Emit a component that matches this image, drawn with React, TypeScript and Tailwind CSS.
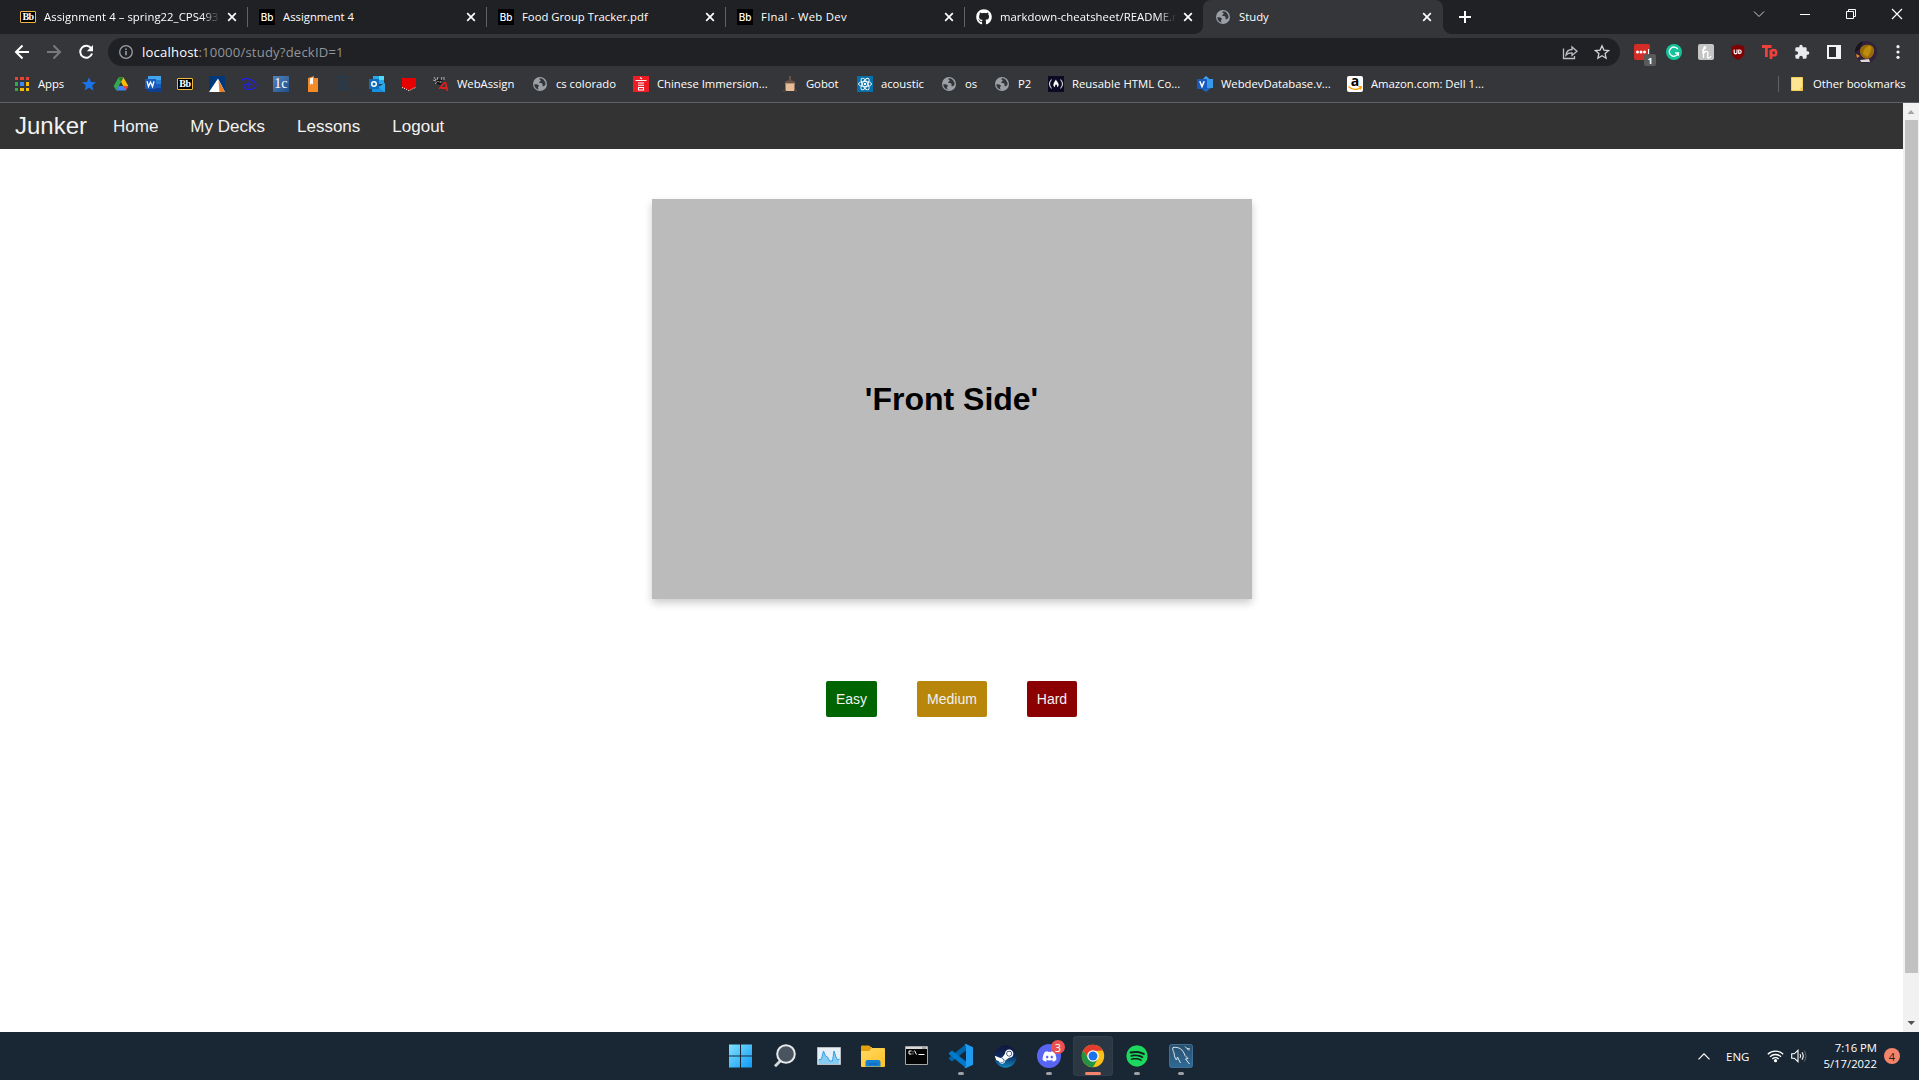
import React from "react";
import { FaGithub, FaSteam, FaDiscord, FaSpotify } from "react-icons/fa";

type Kids = { children: React.ReactNode };

const Globe = () => (
  <svg width="16" height="16" viewBox="0 0 16 16">
    <circle cx="8" cy="8" r="7" fill="#9aa0a6" />
    <path d="M8.5 2.2c-1.6.2-1.2 1.5-.2 1.9 1 .5.2 1.2-.6 1.6-.9.5-.4 1.6.8 1.4 1.6-.2 2.4.9 2 2.1-.3.9.6 1.4 1.6.8 1-.5 1.4-1.300 1.500-2.200C13.300 5 11 2.400 8.500 2.200zM2.300 8.200c1 .2 2.900-.1 4 .7 1.100.800.200 1.600-.2 2.200-.4.700.1 1.700.6 2.500C4.200 13.200 2.300 10.800 2.300 8.200z" fill="#35363a" />
  </svg>
);

const BbSquare = () => (
  <span className="flex h-4 w-4 items-center justify-center bg-black font-['Inter'] text-[10px] font-medium leading-none text-white">Bb</span>
);

const BbGold = () => (
  <span className="flex h-3 w-4 items-center justify-center rounded-[1px] border border-[#f0b83c] bg-black font-['Liberation_Serif'] text-[10px] font-bold leading-none tracking-[-0.5px] text-white">Bb</span>
);

const Close = () => (
  <svg width="10" height="10" viewBox="0 0 10 10" stroke="#fff" strokeWidth="1.7">
    <path d="M1.200 1.200l7.600 7.600M8.800 1.200L1.200 8.800" />
  </svg>
);

const tabs = [
  { title: "Assignment 4 – spring22_CPS493", icon: <BbGold />, fade: true },
  { title: "Assignment 4", icon: <BbSquare /> },
  { title: "Food Group Tracker.pdf", icon: <BbSquare /> },
  { title: "FInal - Web Dev", icon: <BbSquare />, wide: true },
  { title: "markdown-cheatsheet/README.md", icon: <FaGithub size={16} color="#fff" />, fade: true },
];

const TabStrip = () => (
  <div className="flex h-[34px] bg-[#202124] pl-2">
    {tabs.map((t, i) => (
      <div key={t.title} className="relative flex h-[34px] w-[239px] shrink-0 items-center pl-3">
        {t.icon}
        <span className={t.fade ? "ml-2 w-[176px] overflow-hidden whitespace-nowrap tracking-[0.06px] [mask-image:linear-gradient(to_right,#000_158px,transparent_176px)]" : t.wide ? "ml-2 w-[176px] whitespace-nowrap tracking-[0.3px]" : "ml-2 w-[176px] whitespace-nowrap"}>{t.title}</span>
        <span className="ml-[7px]"><Close /></span>
        {i < 4 && <span className="absolute right-[-1px] top-[7px] h-5 w-px bg-[#5f6368]" />}
      </div>
    ))}
    <div className="relative flex h-[34px] w-[240px] shrink-0 items-center rounded-t-lg bg-[#35363a] pl-3">
      <span className="absolute bottom-0 left-[-8px] h-2 w-2 bg-[radial-gradient(circle_at_0_0,transparent_7.500px,#35363a_8px)]" />
      <span className="absolute bottom-0 right-[-8px] h-2 w-2 bg-[radial-gradient(circle_at_100%_0,transparent_7.500px,#35363a_8px)]" />
      <Globe />
      <span className="ml-2 w-[176px]">Study</span>
      <span className="ml-[7px]"><Close /></span>
    </div>
    <div className="flex flex-1 items-center pl-[16px]">
      <svg width="12" height="12" viewBox="0 0 12 12" stroke="#fff" strokeWidth="2"><path d="M6 0v12M0 6h12" /></svg>
    </div>
    <svg className="mt-[6px] shrink-0" width="170" height="16" viewBox="0 0 170 16" fill="none" stroke="#fff" strokeWidth="1">
      <path d="M5 5.500l5 5 5-5" stroke="#d0d0d0" />
      <path d="M51 8.500h10" />
      <path d="M97.500 5.500h7v7h-7zM99.500 5.500v-2h7v7h-2" />
      <path d="M143 3l10 10M153 3l-10 10" strokeWidth="1.200" />
    </svg>
  </div>
);

const Extensions = () => (
  <div className="flex items-center gap-4">
    <span className="relative flex h-4 w-4 items-center rounded-[2px] bg-[#d32d27] pl-[2px]">
      <svg width="14" height="6" viewBox="0 0 14 6" fill="#fff"><circle cx="1.500" cy="3" r="1.500" /><circle cx="5" cy="3" r="1.500" /><circle cx="8.500" cy="3" r="1.500" /><path d="M12 0h1v5h-1z" /></svg>
      <span className="absolute left-[10px] top-[10px] flex h-3 w-3 items-center justify-center rounded-[2px] bg-[#5a5a5a] text-[9px] font-bold leading-none">1</span>
    </span>
    <svg width="16" height="16" viewBox="0 0 16 16" fill="none" stroke="#fff" strokeWidth="1.400"><circle cx="8" cy="8" r="8" fill="#15c39a" stroke="none" /><path d="M11.800 5.200A4.600 4.600 0 1 0 12.300 9H9M12.300 8.500v3.200" /></svg>
    <span className="flex h-4 w-4 items-center justify-center rounded-[2px] bg-[#c4c4c4]">
      <svg width="12" height="13" viewBox="0 0 12 13" fill="none" stroke="#fff" strokeWidth="1.300"><path d="M2 4c2 0 4-2 3.500-3S3.500 1 3.500 4v8M3.500 8c1-3 4.500-3.500 4.500-1 0 2-1.500 5 .5 5 1.300 0 2-1 2.500-2M2 6.500l4-1" /></svg>
    </span>
    <svg width="16" height="16" viewBox="0 0 16 16"><path d="M8 0c2 1.500 4 2 6.500 2v6c0 4-3 6.500-6.500 8-3.500-1.500-6.500-4-6.500-8V2C4 2 6 1.500 8 0z" fill="#800000" stroke="#50282a" strokeWidth=".5" /><path d="M4.200 5.500v3a1.300 1.300 0 0 0 2.800 0v-3M8.700 6v3.400h.8a1.700 1.700 0 0 0 0-3.400z" fill="none" stroke="#fff" strokeWidth="1.200" /></svg>
    <svg width="16" height="16" viewBox="0 0 16 16" fill="none" stroke="#ef403c" strokeWidth="2.800"><path d="M0 2.500h9.500M4.400 2.500V13M9 6v9" /><circle cx="11.600" cy="8.700" r="2.700" strokeWidth="2.400" /></svg>
    <svg width="16" height="16" viewBox="0 0 24 24" fill="#e8eaed"><path d="M20.500 11H19V7a2 2 0 0 0-2-2h-4V3.500a2.500 2.500 0 0 0-5 0V5H4a2 2 0 0 0-2 2v3.800h1.500a2.700 2.700 0 0 1 0 5.400H2V20a2 2 0 0 0 2 2h3.800v-1.500a2.700 2.700 0 0 1 5.400 0V22H17a2 2 0 0 0 2-2v-4h1.500a2.500 2.500 0 0 0 0-5z" /></svg>
    <svg width="16" height="16" viewBox="0 0 16 16"><path d="M1 1h14v14H1z" fill="#f1f3f4" /><path d="M3 3h7v10H3z" fill="#2b2c30" /></svg>
    <span className="-mx-[3px] block h-[22px] w-[22px] overflow-hidden rounded-full">
      <svg width="22" height="22" viewBox="0 0 22 22"><path d="M0 0h22v22H0z" fill="#30213c" /><path d="M0 0h8l-3 8-5 3z" fill="#171420" /><path d="M5 11c-1-7 8-9 12-6 4 3 2 10-2 12-4 2-9 0-10-6z" fill="#9a6a08" /><path d="M8 13c0-5 5-9 8-8 1 3-1 9-4 11z" fill="#bd8c0c" /><path d="M1 13l4 2-3 2z" fill="#f18a1c" /><path d="M5 19l9-1 1 3H6z" fill="#ded8d4" /></svg>
    </span>
    <svg width="16" height="16" viewBox="0 0 16 16" fill="#f1f3f4"><circle cx="8" cy="2.700" r="1.600" /><circle cx="8" cy="8" r="1.600" /><circle cx="8" cy="13.300" r="1.600" /></svg>
  </div>
);

const Toolbar = () => (
  <div className="flex h-9 items-center">
    <svg className="ml-[14px]" width="16" height="16" viewBox="0 0 16 16" fill="none" stroke="#fff" strokeWidth="2"><path d="M15 8H2.500M8.500 1.500L2 8l6.500 6.500" /></svg>
    <svg className="ml-4" width="16" height="16" viewBox="0 0 16 16" fill="none" stroke="#77797d" strokeWidth="2"><path d="M1 8h12.500M7.500 1.500L14 8l-6.500 6.500" /></svg>
    <svg className="ml-4" width="16" height="16" viewBox="0 0 16 16" fill="none" stroke="#fff" strokeWidth="2"><path d="M13.300 4.500A6 6 0 1 0 14 9.500" /><path d="M15 1v6.200H8.800z" fill="#fff" stroke="none" /></svg>
    <div className="ml-[14px] flex h-7 w-[1512px] items-center rounded-full bg-[#202124] pl-[11px] pr-2.5">
      <svg width="14" height="14" viewBox="0 0 14 14" fill="none" stroke="#9aa0a6" strokeWidth="1.300"><circle cx="7" cy="7" r="6.300" /><path d="M7 6v4.300M7 3.400v1.500" strokeWidth="1.600" /></svg>
      <span className="ml-[9px] flex-1 pt-[2px] text-[13.100px] tracking-[0.18px] text-[#92959a]"><span className="text-white">localhost</span>:10000/study?deckID=1</span>
      <svg width="16" height="16" viewBox="0 0 16 16" fill="none" stroke="#bdc1c6" strokeWidth="1.300"><path d="M1.500 4.500v10h11V12M4 11c.5-4 2.500-5.500 6-5.500V3l5 4.200-5 4.200V8.800c-2.500 0-4.500.4-6 2.200z" /></svg>
      <svg className="ml-4" width="16" height="16" viewBox="0 0 16 16" fill="none" stroke="#d0d3d7" strokeWidth="1.300"><path d="M8 1.800l1.900 4.300 4.700.4-3.500 3.100 1 4.600L8 11.800l-4.100 2.400 1-4.600-3.500-3.100 4.700-.4z" /></svg>
    </div>
    <div className="ml-[14px]"><Extensions /></div>
  </div>
);

const svg = (children: React.ReactNode) => <svg width="16" height="16" viewBox="0 0 16 16">{children}</svg>;

const dotColors = ["#ea4335", "#ea4335", "#ea4335", "#34a853", "#4285f4", "#fbbc04", "#34a853", "#fbbc04", "#fbbc04"];
const AppsIcon = () => (
  <span className="grid grid-cols-3 gap-[2px]">
    {dotColors.map((c, i) => <span key={i} className="h-[3.300px] w-[3.300px]" style={{ background: c }} />)}
  </span>
);

const small = [
  svg(<path d="M8 1.300l2 4.600 5 .4-3.800 3.300 1.200 4.900L8 11.800l-4.400 2.700 1.200-4.900L1 6.300l5-.4z" fill="#1a73e8" />),
  svg(<><path d="M5.500 1.500h5l4.800 8.500h-5z" fill="#fbbc04" /><path d="M5.500 1.500L.7 10l2.500 4.400L8 6z" fill="#34a853" /><path d="M5.500 1.500h5L8 6z" fill="#188038" /><path d="M5.700 10h9.600l-2.500 4.400H3.200z" fill="#4285f4" /><path d="M10.300 10h5l-2.500 4.400z" fill="#ea4335" /></>),
  svg(<><path d="M3 0h13v4H3z" fill="#41a5ee" /><path d="M3 4h13v4H3z" fill="#2b7cd3" /><path d="M3 8h13v4H3z" fill="#185abd" /><path d="M3 12h13v4H3z" fill="#103f91" /><path d="M0 3h11v10H0z" fill="#185abd" /><path d="M2 5.300l1.500 5.200L5.500 6l2 4.500L9 5.300" fill="none" stroke="#fff" strokeWidth="1.300" /></>),
  <BbGold />,
  svg(<><path d="M0 0h16v16H0z" fill="#00387b" /><path d="M9 2.500L16 16H0z" fill="#fff" /><path d="M9.500 4.500L16 16h-5.500z" fill="#ef7d22" /></>),
  svg(<path d="M.5 3.800C5 .8 14 4 15 8.700c.5 3.800-4.500 5.300-8.500 4.600-2.500-.5-4-2-3.500-3.800.5-1.500 4-1.800 6-1.300 2 .4 2.500 1.400 1.200 2M7 5.500v8.500M.5 3.800l3 .2" fill="none" stroke="#2020e8" strokeWidth="1.200" />),
  <span className="flex h-4 w-4 items-center justify-center bg-linear-to-br from-[#5284bb] to-[#234f8c] font-['Liberation_Serif'] text-[14px] leading-none text-white">1c</span>,
  svg(<><path d="M3 2l6-2v2h4v14H3z" fill="#f58a27" /><path d="M5 2.500l3-1v7L6.500 7.500 5 9z" fill="#fff" /></>),
  svg(<><path d="M1 1h9v12H1z" fill="none" stroke="#233d50" strokeWidth="1.300" /><path d="M8 5H4v5h4M12 14h4" fill="none" stroke="#233d50" strokeWidth="1.500" /></>),
  svg(<><path d="M4 0h11v8H4z" fill="#28a8ea" /><path d="M10 0h5v4h-5z" fill="#50d9ff" /><path d="M4 4h6v5H4z" fill="#0364b8" /><path d="M3 16V7l7 4 6-4v9z" fill="#1490df" /><path d="M9 11l7-4v9z" fill="#28a8ea" /><path d="M0 3h10v10H0z" fill="#0f6cbd" /><circle cx="5" cy="8" r="2.300" fill="none" stroke="#fff" strokeWidth="1.400" /></>),
  svg(<><path d="M1 2h14v9.500c-2 .5-5 1.800-7 3.500-2-1.700-5-3-7-3.500z" fill="#e60000" /><path d="M1 11.500c2 .5 5 1.800 7 3.500 2-1.700 5-3 7-3.500" fill="none" stroke="#fff" strokeDasharray="1 1.200" /></>),
];

const marks = [
  { t: "WebAssign", w: "w-[59px]", icon: svg(<><path d="M1 1l2 3M5 1l-1 3M9 1L8 4M11 1v3M0 4l3 1M2 8l2-2" stroke="#bbb" strokeWidth=".9" fill="none" /><circle cx="6.500" cy="6" r="2.800" fill="#111" /><path d="M6.500 6h2M4.500 5.500h1" stroke="#ddd" /><path d="M6 13l5-6h1.500L14.500 15M8 12h5.500" fill="none" stroke="#d9201f" strokeWidth="1.800" /></>) },
  { t: "cs colorado", w: "w-[61px]", icon: <Globe /> },
  { t: "Chinese Immersion...", w: "w-[109px]", icon: svg(<><path d="M0 0h16v16H0z" fill="#ee1c25" /><path d="M7 1.500l2 1.500M2.500 4.500h11M5 7h6M5 9.200h6M5.500 11.500h5V14h-5z" fill="none" stroke="#fff" strokeWidth="1.100" /></>) },
  { t: "Gobot", w: "w-[35px]", icon: svg(<><path d="M7.300 0h1.400v4H7.300z" fill="#8d5a44" /><path d="M3 6c1-2.500 9-2.500 10 0v2H3z" fill="#6b5148" /><path d="M3.500 7h9v8h-9z" fill="#e8bd96" /><path d="M3.500 7h9v1h-9z" fill="#b89070" /><path d="M1 14h3v1.500H1zM12 14h3v1.500h-3z" fill="#584940" /></>) },
  { t: "acoustic", w: "w-[44px]", icon: svg(<><path d="M0 0h16v16H0z" fill="#0870a8" /><g fill="none" stroke="#fff" strokeWidth=".9"><ellipse cx="8" cy="8" rx="6.500" ry="2.600" /><ellipse cx="8" cy="8" rx="6.500" ry="2.600" transform="rotate(60 8 8)" /><ellipse cx="8" cy="8" rx="6.500" ry="2.600" transform="rotate(120 8 8)" /></g><circle cx="8" cy="8" r="1.200" fill="#fff" /></>) },
  { t: "os", w: "w-[13px]", icon: <Globe /> },
  { t: "P2", w: "w-[14px]", icon: <Globe /> },
  { t: "Reusable HTML Co...", w: "w-[109px] tracking-[0.06px]", icon: svg(<><path d="M0 0h16v16H0z" fill="#0a0a23" /><path d="M3.500 3.500Q-.5 8 3.500 12.500M12.500 3.500q4 4.500 0 9" fill="none" stroke="#d5d5e0" strokeWidth="1.100" /><path d="M8 3.500c.5 2 3 3.300 2.600 5.800-.2 1-.8 1.700-1.600 2 .6-1.300.2-2-1-3-.8 1-1.500 1.700-.8 3C4 10.300 5.500 6.700 8 3.500z" fill="#fff" /></>) },
  { t: "WebdevDatabase.v...", w: "w-[110px]", icon: svg(<><path d="M5 4l4-4 5 4v8l-5 4-4-3z" fill="#1b68c4" /><path d="M10 3h6v9h-6z" fill="#3999e8" /><path d="M5 4l4-4 3 3-3 2z" fill="#41a5ee" /><path d="M0 3h10v10H0z" fill="#185abd" /><path d="M2.800 5.300L5 10.500l2.200-5.200" fill="none" stroke="#fff" strokeWidth="1.500" /></>) },
  { t: "Amazon.com: Dell 1...", w: "w-[115px]", icon: <span className="relative flex h-4 w-4 justify-center rounded-[2px] bg-white font-['Open_Sans'] text-[14px] font-bold leading-[10px] text-black">a<svg className="absolute bottom-[1px] left-[1px]" width="14" height="5" viewBox="0 0 14 5" fill="none" stroke="#ff9900" strokeWidth="1.300"><path d="M.5.500c4 4 9 3.500 12 1.200M10.500.700h2.800l-.8 2.800" /></svg></span> },
];

const Bookmarks = () => (
  <div className="flex h-[33px] items-center pb-[5px] pl-[15px]">
    <AppsIcon />
    <span className="ml-[9px] w-[27px]">Apps</span>
    <div className="ml-4 flex shrink-0 items-center gap-4">
      {small.map((s, i) => <span key={i} className="flex w-4 justify-center">{s}</span>)}
      {marks.map((m) => (
        <span key={m.t} className="flex shrink-0 items-center gap-2">{m.icon}<span className={`${m.w} whitespace-nowrap`}>{m.t}</span></span>
      ))}
    </div>
    <span className="ml-auto h-4 w-px bg-[#5f6368]" />
    <svg className="ml-3" width="13" height="15" viewBox="0 0 13 15"><path d="M.5.500h11v13h-11z" fill="#ffe591" stroke="#f3cf57" /><path d="M9.500 10.500h2.500V14H9.500z" fill="#f4c542" /></svg>
    <span className="ml-[9px] mr-[13px] w-[93px] whitespace-nowrap">Other bookmarks</span>
  </div>
);

const Page = () => (
  <div className="flex h-[929px]">
    <main className="flex flex-1 flex-col items-center bg-white font-['Liberation_Sans',sans-serif]">
      <nav className="flex h-[46px] w-full items-center bg-[#333] text-[#f2f2f2]">
        <span className="ml-[15px] w-[98px] text-[24px] leading-none">Junker</span>
        <div className="flex gap-8 pt-[2px] text-[17px]">
          <span>Home</span><span>My Decks</span><span>Lessons</span><span>Logout</span>
        </div>
      </nav>
      <section className="mt-[50px] flex h-[400px] w-[600px] items-center justify-center bg-[#bbb] shadow-[0_4px_8px_0_rgba(0,0,0,0.2)]">
        <h1 className="text-[32px] font-bold text-black">'Front Side'</h1>
      </section>
      <div className="mt-[82px] flex gap-10 text-[14px] text-[#f2f2f2]">
        <button className="h-9 w-[51px] rounded-[2px] bg-[#006400]">Easy</button>
        <button className="h-9 w-[70px] rounded-[2px] bg-[#b8860b]">Medium</button>
        <button className="h-9 w-[50px] rounded-[2px] bg-[#8b0000]">Hard</button>
      </div>
    </main>
    <aside className="flex w-4 flex-col items-center bg-[#f1f1f1]">
      <svg width="16" height="17" viewBox="0 0 16 17"><path d="M4.500 11L8 7l3.500 4z" fill="#a3a3a3" /></svg>
      <div className="w-[13px] flex-1 bg-[#c1c1c1]" />
      <svg width="16" height="59" viewBox="0 0 16 59"><path d="M4.500 48h7.500l-3.700 4z" fill="#505050" /></svg>
    </aside>
  </div>
);

const TaskItem = ({ children, running, active }: Kids & { running?: boolean; active?: boolean }) => (
  <div className="relative flex h-12 w-11 items-center justify-center">
    {active && <span className="absolute left-[2px] top-1 h-10 w-10 rounded bg-[#2b3743] ring-1 ring-inset ring-[#323e4a]" />}
    <span className="relative">{children}</span>
    {running && <span className="absolute bottom-[5px] h-[3px] w-1.5 rounded-full bg-[#9ba1a6]" />}
    {active && <span className="absolute bottom-[5px] h-[3px] w-4 rounded-full bg-[#f4846b]" />}
  </div>
);

const Taskbar = () => (
  <footer className="flex h-12 bg-[#192734] text-white">
    <div className="ml-[719px] flex">
      <TaskItem>
        <svg width="24" height="24" viewBox="0 0 24 24"><defs><linearGradient id="win" gradientUnits="userSpaceOnUse" x1="0" y1="0" x2="24" y2="24"><stop stopColor="#82e2fd" /><stop offset="1" stopColor="#0a98f7" /></linearGradient></defs><path d="M0 .5h11v11H0zM12 .5h11v11H12zM0 12.500h11v11H0zM12 12.500h11v11H12z" fill="url(#win)" /></svg>
      </TaskItem>
      <TaskItem>
        <svg width="24" height="24" viewBox="0 0 24 24" fill="none"><path d="M8.200 16L2 22.300" stroke="#d5d8db" strokeWidth="2.800" /><circle cx="13" cy="10" r="8.800" fill="#485561" stroke="#e6e8ea" strokeWidth="2" /></svg>
      </TaskItem>
      <TaskItem>
        <svg width="24" height="18" viewBox="0 0 24 18"><path d="M.5.500h23v17H.5z" fill="#e8f0f7" stroke="#b8bec4" /><path d="M1.500 13l3-1 2-8 2 5 2 1 2 4 3 0 1.500-10 2 6 1.500 3 2-1v5h-21z" fill="#8acbf2" /><path d="M1.500 13l3-1 2-8 2 5 2 1 2 4h3l1.500-10 2 6 1.500 3 2-1" fill="none" stroke="#2e9fe6" /></svg>
      </TaskItem>
      <TaskItem>
        <svg width="24" height="22" viewBox="0 0 24 22"><defs><linearGradient id="fold" x1="0" y1="0" x2="1" y2="1"><stop stopColor="#ffda65" /><stop offset="1" stopColor="#ffc123" /></linearGradient></defs><path d="M0 1.500Q0 .5 1 .5h7l2.500 2H0z M0 2h11v5H0z" fill="#e5a00d" /><path d="M0 6h8l3-3h12q1 0 1 1v17q0 1-1 1H1q-1 0-1-1z" fill="url(#fold)" /><path d="M4.500 21.500V17q0-2 2-2h11q2 0 2 2v4.500z" fill="#1580d4" /><path d="M7.500 18.500h9v1h-9z" fill="#0b63b5" /></svg>
      </TaskItem>
      <TaskItem>
        <svg width="24" height="20" viewBox="0 0 24 20"><path d="M.5.500h22v18h-22z" fill="#050505" stroke="#a6a6a6" /><path d="M1 1h21v2H1z" fill="#dadada" /><path d="M17 1.500h4v1h-4z" fill="#777" /><path d="M6.500 5H4v3h2.500M8 5.500v.8M8 7.500v.8M9.500 4.500l2 4M13.500 8.500h6" fill="none" stroke="#fff" /></svg>
      </TaskItem>
      <TaskItem running>
        <svg width="24" height="24" viewBox="0 0 24 24"><path d="M17 0v6.500L3 17.500 0 15.200v-1.400z" fill="#0065a9" /><path d="M17 24v-6.500L3 6.500 0 8.800v1.400z" fill="#007acc" /><path d="M17 0l7 3.300v17.400L17 24q-1 .2-1.500-.5L17 22V2L15.500.5Q16 0 17 0z" fill="#1f9cf0" /></svg>
      </TaskItem>
      <TaskItem>
        <svg className="absolute" width="0" height="0"><defs><linearGradient id="steam" x1="0" y1="0" x2="0" y2="1"><stop stopColor="#13143c" /><stop offset=".5" stopColor="#0b2c5c" /><stop offset="1" stopColor="#1389c4" /></linearGradient></defs></svg>
        <span className="flex h-[22px] w-[22px] items-center justify-center rounded-full bg-[radial-gradient(circle,#fff_9.500px,transparent_10px)]"><FaSteam size={23} className="shrink-0 fill-[url(#steam)]" /></span>
      </TaskItem>
      <TaskItem running>
        <span className="flex h-6 w-6 items-center justify-center rounded-full bg-[#5865f2]"><FaDiscord size={15} /></span>
        <span className="absolute -right-[4px] -top-[4px] flex h-[14px] w-[14px] items-center justify-center rounded-full bg-[#eb5150] text-[11px] leading-none">3</span>
      </TaskItem>
      <TaskItem active>
        <svg width="24" height="24" viewBox="0 0 24 24"><circle cx="12" cy="12" r="11.200" fill="#fbc116" /><path d="M2.300 6.400A11.200 11.200 0 0 1 21.700 6.400L12 7 7.500 14.600z" fill="#e33b2e" /><path d="M2.300 6.400A11.200 11.200 0 0 0 12 23.200l4.700-8.200-4.700 2-4.500-2.400z" fill="#229342" /><circle cx="12" cy="12" r="5.800" fill="#fff" /><circle cx="12" cy="12" r="4.500" fill="#1a73e8" /></svg>
      </TaskItem>
      <TaskItem running><FaSpotify size={22} color="#1ed760" className="rounded-full bg-[#10201c]" /></TaskItem>
      <TaskItem running>
        <svg width="24" height="24" viewBox="0 0 24 24"><defs><linearGradient id="sql" x1="0" y1="0" x2="0" y2="1"><stop stopColor="#2a4f6e" /><stop offset="1" stopColor="#2f6b96" /></linearGradient></defs><rect x=".5" y=".5" width="23" height="23" rx="2" fill="url(#sql)" stroke="#3f6f96" /><path d="M4 3.500c6-1 10 2 12 8l3 3-2.500.5 4 5M4 3.500c-1 2 .5 3.500 1 5.500.5 3 1 6 2.500 7l1-3 3 6M16 2.500l2 2 3 .5M18 4.500l2 2" fill="none" stroke="#dce8f0" strokeWidth="1" /></svg>
      </TaskItem>
    </div>
    <div className="ml-auto flex items-center">
      <svg width="12" height="7" viewBox="0 0 12 7" fill="none" stroke="#fff" strokeWidth="1.200"><path d="M.5 6.300L6 .8l5.500 5.500" /></svg>
      <span className="ml-4 w-[24px] pt-px text-[11.500px]">ENG</span>
      <svg className="ml-[17px]" width="17" height="14" viewBox="0 0 17 14" fill="none" stroke="#fff" strokeWidth="1.300"><path d="M.8 5.300a11 11 0 0 1 15.400 0M3 7.700a8 8 0 0 1 11 0M5.300 10a4.700 4.700 0 0 1 6.400 0" /><circle cx="8.500" cy="11.700" r="1.600" fill="#fff" stroke="none" /></svg>
      <svg className="ml-[7px]" width="17" height="14" viewBox="0 0 17 14" fill="none" stroke="#fff" strokeWidth="1.100"><path d="M.7 4.800h2.600L7 1.300v11.400L3.300 9.200H.7z" /><path d="M9 5q1.300 2 0 4M11 3.300q2.500 3.700 0 7.400" /><path d="M13.200 1.500q3.600 5.500 0 11" stroke="#56616c" /></svg>
      <div className="ml-[14px] w-[55px] whitespace-nowrap text-right text-[11.300px] leading-4"><div>7:16 PM</div><div>5/17/2022</div></div>
      <span className="ml-[7px] mr-[19px] flex h-4 w-4 items-center justify-center rounded-full bg-[#f4846b] text-[11px] leading-none text-[#222]">4</span>
    </div>
  </footer>
);

export default function App() {
  return (
    <div className="flex h-[1080px] w-[1919px] flex-col overflow-hidden bg-[#35363a] font-['Open_Sans',sans-serif] text-[11.300px] text-white">
      <TabStrip />
      <Toolbar />
      <div className="h-[33px]"><Bookmarks /></div>
      <div className="-mt-px h-px bg-[#5f6165]" />
      <Page />
      <Taskbar />
    </div>
  );
}
